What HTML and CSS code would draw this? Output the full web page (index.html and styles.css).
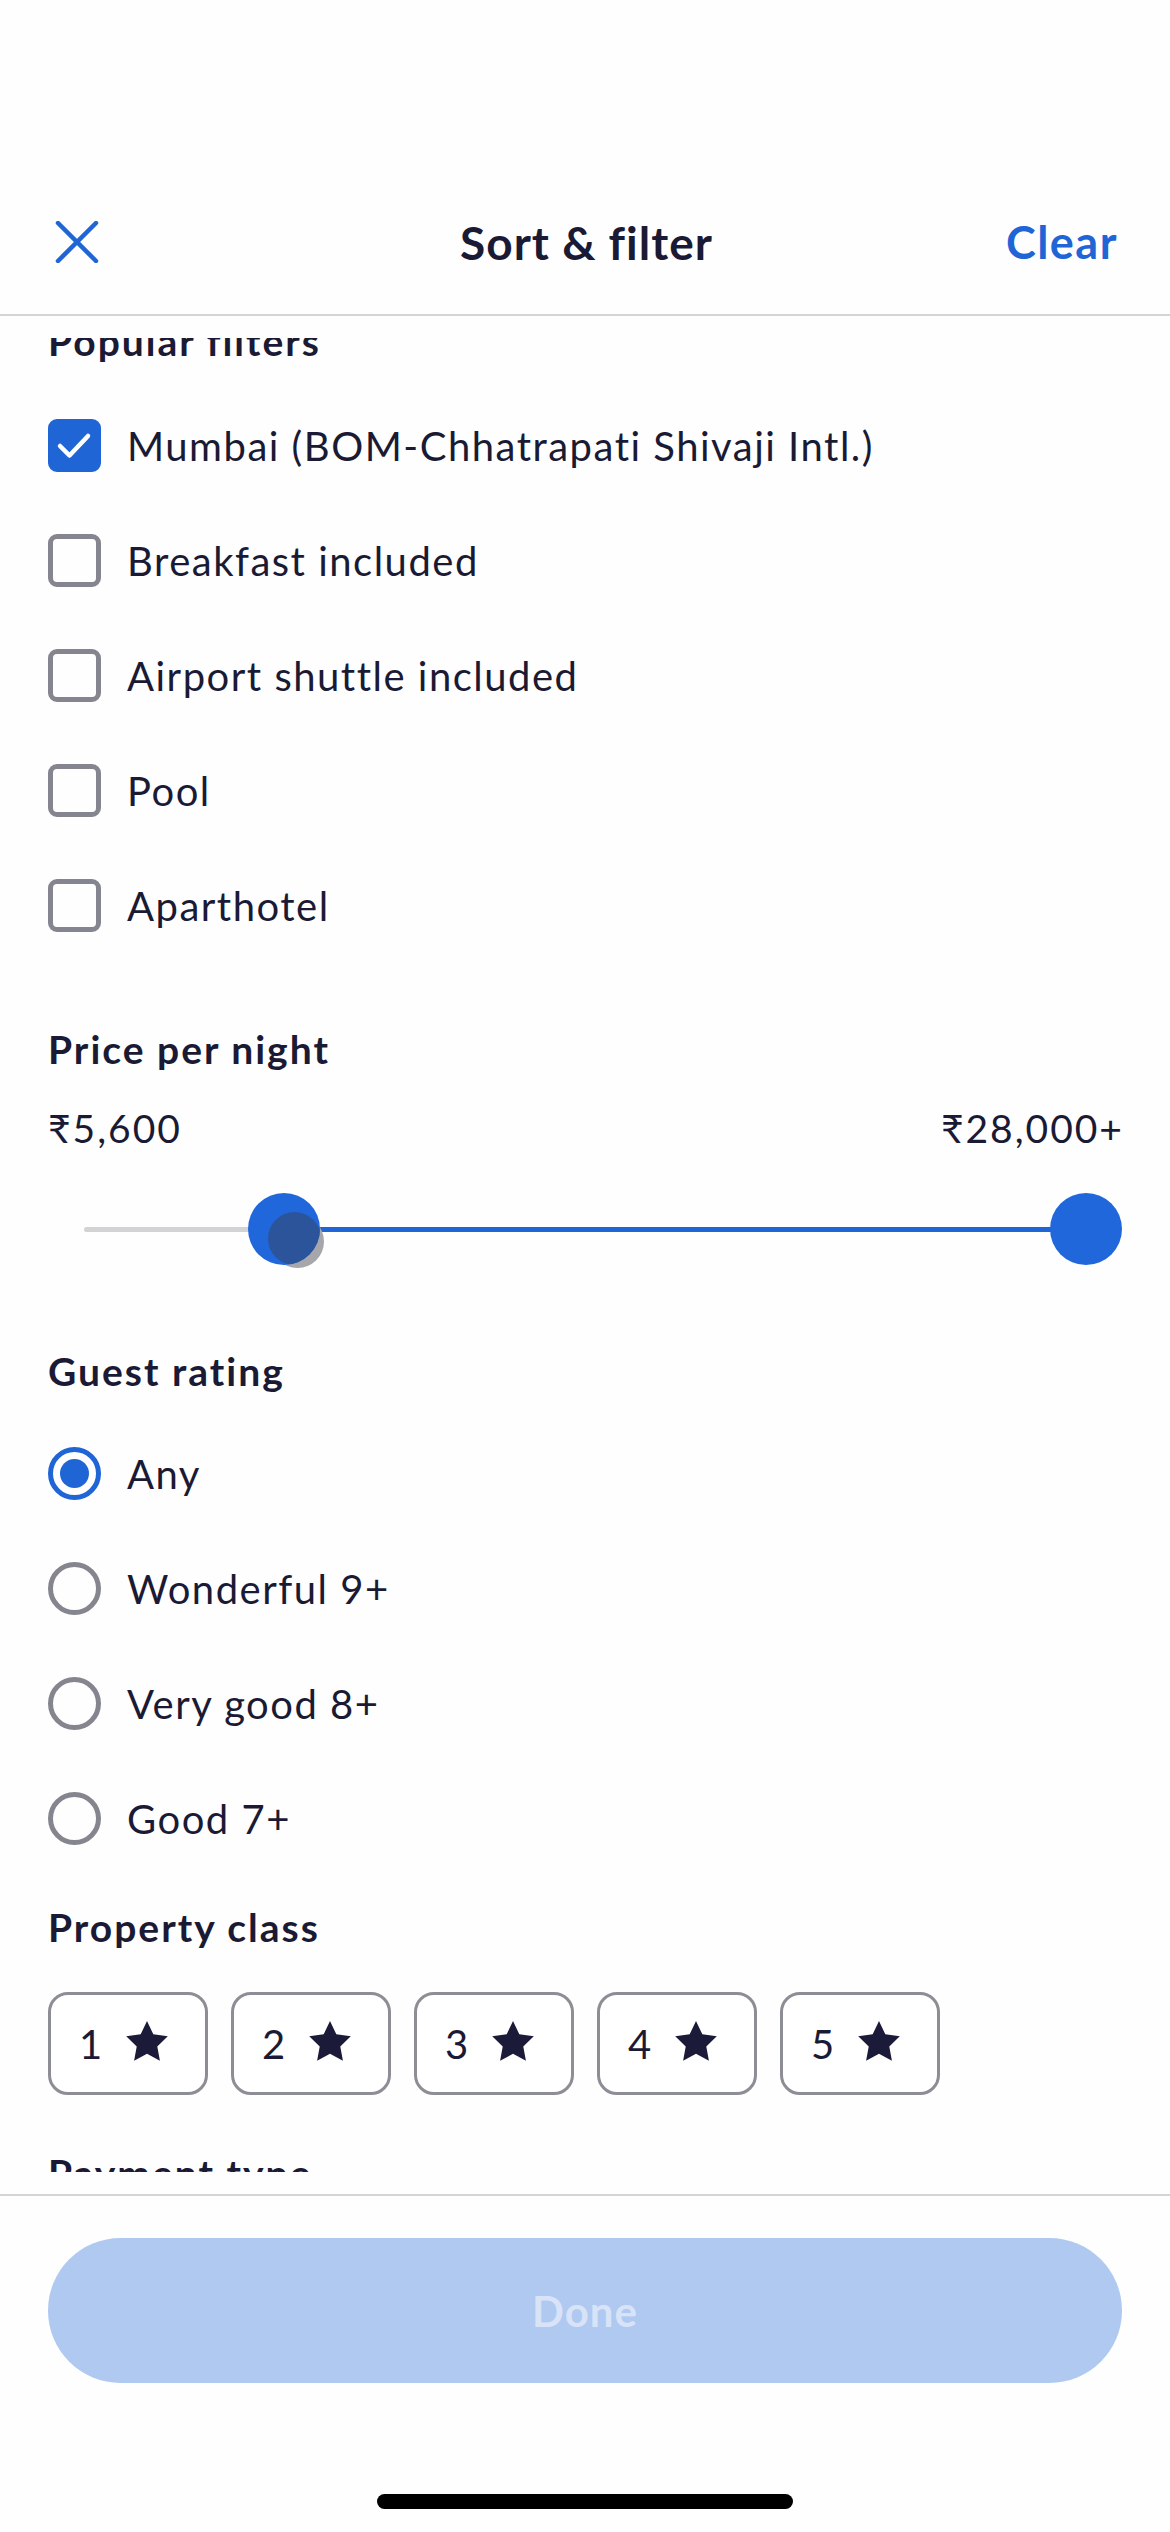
FILE: index.html
```html
<!DOCTYPE html>
<html lang="en">
<head>
<meta charset="utf-8">
<title>Sort &amp; filter</title>
<link rel="stylesheet" href="styles.css">
</head>
<body>
<div class="page">
  <header class="header">
    <div class="header-row">
      <button class="icon-btn" aria-label="Close">
        <svg width="44" height="42" viewBox="0 0 44 42"><path d="M3 2 L41 40 M41 2 L3 40" stroke="#1f65d6" stroke-width="4.5" stroke-linecap="round" fill="none"/></svg>
      </button>
      <h1 class="title">Sort &amp; filter</h1>
      <button class="clear">Clear</button>
    </div>
  </header>

  <main class="scroll">
    <div class="scroll-inner">
      <h2 class="heading">Popular filters</h2>
      <ul class="options">
        <li class="option"><span class="checkbox checked"><svg width="52" height="52" viewBox="0 0 52 52"><path d="M12 27 L21.5 36.5 L40 17" stroke="#fff" stroke-width="4.5" stroke-linecap="round" stroke-linejoin="round" fill="none"/></svg></span><span class="label">Mumbai (BOM-Chhatrapati Shivaji Intl.)</span></li>
        <li class="option"><span class="checkbox"></span><span class="label">Breakfast included</span></li>
        <li class="option"><span class="checkbox"></span><span class="label">Airport shuttle included</span></li>
        <li class="option"><span class="checkbox"></span><span class="label">Pool</span></li>
        <li class="option"><span class="checkbox"></span><span class="label">Aparthotel</span></li>
      </ul>

      <h2 class="heading price-heading">Price per night</h2>
      <div class="price-values"><span>₹5,600</span><span>₹28,000+</span></div>
      <div class="slider">
        <div class="track-gray"></div>
        <div class="track-blue"></div>
        <div class="thumb-shadow"></div>
        <div class="thumb thumb-left"><div class="thumb-press"></div></div>
        <div class="thumb thumb-right"></div>
      </div>

      <h2 class="heading rating-heading">Guest rating</h2>
      <ul class="options radios">
        <li class="option"><span class="radio selected"></span><span class="label">Any</span></li>
        <li class="option"><span class="radio"></span><span class="label">Wonderful 9+</span></li>
        <li class="option"><span class="radio"></span><span class="label">Very good 8+</span></li>
        <li class="option"><span class="radio"></span><span class="label">Good 7+</span></li>
      </ul>

      <h2 class="heading class-heading">Property class</h2>
      <div class="stars">
        <button class="star-btn"><span>1</span><svg width="44" height="42" viewBox="2 2 20 19.2"><path d="M12 2l2.9 6.1 6.6.9-4.8 4.6 1.2 6.6L12 17l-5.9 3.2 1.2-6.6L2.5 9l6.6-.9z" fill="#1b1a38"/></svg></button>
        <button class="star-btn"><span>2</span><svg width="44" height="42" viewBox="2 2 20 19.2"><path d="M12 2l2.9 6.1 6.6.9-4.8 4.6 1.2 6.6L12 17l-5.9 3.2 1.2-6.6L2.5 9l6.6-.9z" fill="#1b1a38"/></svg></button>
        <button class="star-btn"><span>3</span><svg width="44" height="42" viewBox="2 2 20 19.2"><path d="M12 2l2.9 6.1 6.6.9-4.8 4.6 1.2 6.6L12 17l-5.9 3.2 1.2-6.6L2.5 9l6.6-.9z" fill="#1b1a38"/></svg></button>
        <button class="star-btn"><span>4</span><svg width="44" height="42" viewBox="2 2 20 19.2"><path d="M12 2l2.9 6.1 6.6.9-4.8 4.6 1.2 6.6L12 17l-5.9 3.2 1.2-6.6L2.5 9l6.6-.9z" fill="#1b1a38"/></svg></button>
        <button class="star-btn"><span>5</span><svg width="44" height="42" viewBox="2 2 20 19.2"><path d="M12 2l2.9 6.1 6.6.9-4.8 4.6 1.2 6.6L12 17l-5.9 3.2 1.2-6.6L2.5 9l6.6-.9z" fill="#1b1a38"/></svg></button>
      </div>

      <h2 class="heading next-heading">Payment type</h2>
    </div>
  </main>

  <footer class="footer">
    <button class="done" disabled>Done</button>
    <div class="home-indicator"></div>
  </footer>
</div>
</body>
</html>
```

FILE: styles.css
```css
* { box-sizing: border-box; }
html, body { margin: 0; padding: 0; }
body {
  background: #fefefe;
  font-family: "Lato", "Noto Sans", "DejaVu Sans", sans-serif;
  color: #1b1a34;
}
.page {
  width: 1170px;
  height: 2532px;
  display: flex;
  flex-direction: column;
  overflow: hidden;
}

/* Header */
.header {
  height: 316px;
  padding-top: 170px;
  border-bottom: 2px solid #d4d4d7;
  flex: none;
}
.header-row {
  height: 144px;
  display: grid;
  grid-template-columns: 1fr auto 1fr;
  align-items: center;
  padding: 0 52px 0 55px;
}
.icon-btn {
  background: none;
  border: 0;
  padding: 0;
  justify-self: start;
  display: flex;
}
.title {
  margin: 0;
  font-size: 46px;
  font-weight: 700;
  color: #1b1a34;
  letter-spacing: 1px;
}
.clear {
  justify-self: end;
  background: none;
  border: 0;
  padding: 0;
  font-family: inherit;
  font-size: 45px;
  font-weight: 700;
  color: #1f65d6;
  letter-spacing: 1.5px;
}

/* Scroll area */
.scroll {
  flex: 1;
  margin: 22px 0;
  overflow: hidden;
}
.scroll-inner {
  margin-top: -21px;
  padding: 0 48px;
}
.heading {
  margin: 0;
  font-size: 39px;
  line-height: 48px;
  font-weight: 700;
  color: #1b1a34;
  letter-spacing: 2px;
}
.options {
  list-style: none;
  margin: 23px 0 0;
  padding: 0;
}
.option {
  height: 115px;
  display: flex;
  align-items: center;
  gap: 26px;
}
.label {
  font-size: 40px;
  color: #1b1a34;
  letter-spacing: 1.5px;
}
.checkbox {
  width: 53px;
  height: 53px;
  border: 5px solid #85858f;
  border-radius: 9px;
  flex: none;
  position: relative;
}
.checkbox.checked {
  background: #1f65d6;
  border-color: #1f65d6;
}
.checkbox svg {
  position: absolute;
  left: -5px;
  top: -5px;
}

/* Price */
.price-heading { margin-top: 62px; }
.price-values {
  margin-top: 31px;
  display: flex;
  justify-content: space-between;
  font-size: 39px;
  line-height: 48px;
  color: #1b1a34;
  letter-spacing: 2px;
}
.price-values span:last-child { margin-right: -2px; }
.slider {
  position: relative;
  height: 72px;
  margin-top: 41px;
}
.track-gray {
  position: absolute;
  left: 36px;
  width: 210px;
  top: 34px;
  height: 5px;
  border-radius: 3px;
  background: #d3d3d5;
}
.track-blue {
  position: absolute;
  left: 236px;
  width: 802px;
  top: 34px;
  height: 5px;
  background: #1f65d6;
}
.thumb {
  position: absolute;
  top: 0;
  width: 72px;
  height: 72px;
  border-radius: 50%;
  background: #2167dc;
  overflow: hidden;
}
.thumb-left { left: 200px; }
.thumb-right { left: 1002px; }
.thumb-press {
  position: absolute;
  left: 20px;
  top: 19px;
  width: 53px;
  height: 53px;
  border-radius: 50%;
  background: #2b549b;
}
.thumb-shadow {
  position: absolute;
  left: 223px;
  top: 22px;
  width: 53px;
  height: 53px;
  border-radius: 50%;
  background: #a7a7ab;
}

/* Guest rating */
.rating-heading { margin-top: 82px; }
.radios { margin-top: 21px; }
.radio {
  width: 53px;
  height: 53px;
  border: 5px solid #85858f;
  border-radius: 50%;
  flex: none;
  display: flex;
  align-items: center;
  justify-content: center;
}
.radio.selected {
  border-color: #1f65d6;
}
.radio.selected::after {
  content: "";
  width: 29px;
  height: 29px;
  border-radius: 50%;
  background: #1f65d6;
}

/* Property class */
.class-heading { margin-top: 27px; }
.stars {
  margin-top: 41px;
  display: flex;
  gap: 23px;
}
.star-btn {
  width: 160px;
  height: 103px;
  border: 3px solid #8d8d95;
  border-radius: 20px;
  background: #fff;
  display: flex;
  align-items: center;
  justify-content: center;
  gap: 23px;
  padding: 0 8px 0 0;
  font-family: inherit;
  font-size: 40px;
  color: #1b1a34;
}
.star-btn svg { margin-top: -4px; }
.next-heading { margin-top: 54px; }

/* Footer */
.footer {
  flex: none;
  height: 338px;
  border-top: 2px solid #d4d4d7;
  padding: 42px 48px 0;
  display: flex;
  flex-direction: column;
  align-items: center;
}
.done {
  width: 100%;
  height: 145px;
  border: 0;
  border-radius: 73px;
  background: #b0c9f1;
  color: #d8e3f7;
  font-family: inherit;
  font-size: 42px;
  font-weight: 700;
  letter-spacing: 1px;
}
.home-indicator {
  margin-top: 111px;
  width: 416px;
  height: 15px;
  border-radius: 8px;
  background: #000;
}
```
